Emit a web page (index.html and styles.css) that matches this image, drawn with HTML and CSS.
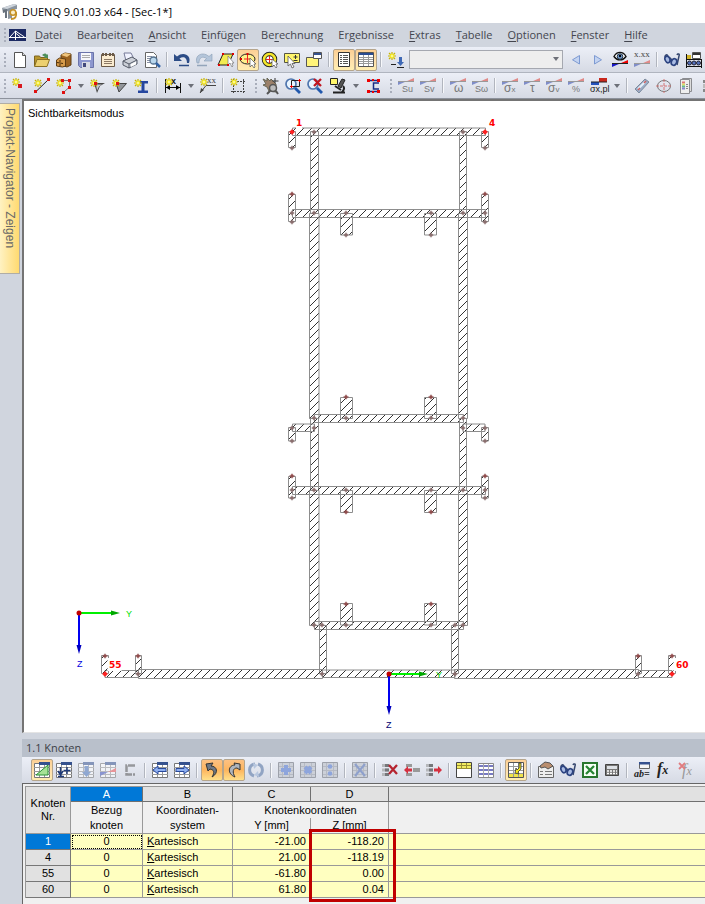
FILE: index.html
```html
<!DOCTYPE html>
<html lang="de">
<head>
<meta charset="utf-8">
<title>DUENQ 9.01.03 x64 - [Sec-1*]</title>
<link rel="stylesheet" href="styles.css">
</head>
<body>
<svg class="defs" aria-hidden="true">
  <defs>
    <g id="star"><path d="M4 0v8M0 4h8M1 1l6 6M7 1l-6 6" stroke="#c8b400" stroke-width="1.2"/><circle cx="4" cy="4" r="2.3" fill="#f4ea30"/><circle cx="4" cy="4" r="1" fill="#fffcb0"/></g>
    <g id="slope"><path d="M0 7V3.500h8z" fill="#7f8dc8"/><path d="M8 3.500L16 0v3.500z" fill="#e08a88"/><path d="M0 3.500h16" stroke="#999"/></g>
    <g id="sheet"><path d="M.5 1.500h15v14H.5z" fill="#fff" stroke="#777"/><path d="M0 5.500h16M0 9.500h16M0 12.500h16M5.500 3v12M10.500 3v12" stroke="#999"/><path d="M5 0h11v3H5z" fill="#35518e"/></g>
    <g id="mat"><path d="M.5 .5h15v15H.5z" fill="#ccd0d8" stroke="#9da1aa"/><path d="M1 4.500h14M1 8.500h14M1 12.500h14M4.500 1v14M11.500 1v14" stroke="#b6bac4"/></g>
    <g id="rows"><path d="M0 2h7v3H0zM0 6.500h7v3H0zM0 11h7v3H0z" fill="#b5b7bb"/><path d="M3 2h4v3H3zM3 6.500h4v3H3zM3 11h4v3H3z" fill="#75777b"/></g>
    <g id="glasses"><path d="M1 5c0-2 2-3 3-1M5 5l3 3M13 3c1-2 3-1 2 1l-2 9" fill="none" stroke="#35466e" stroke-width="1.500"/><ellipse cx="3.500" cy="7.500" rx="2.400" ry="3.400" fill="#a9bbe3" stroke="#2c4380" stroke-width="1.600" transform="rotate(-25 3.500 7.500)"/><ellipse cx="10" cy="10" rx="2.600" ry="3.400" fill="#a9bbe3" stroke="#2c4380" stroke-width="1.600" transform="rotate(25 10 10)"/><path d="M5.500 8.500h2.500" stroke="#2c4380" stroke-width="2"/></g>
    <pattern id="hatch" width="8" height="8" patternUnits="userSpaceOnUse"><path d="M-1 1L1-1M0 8L8 0M7 9l2-2" stroke="#333" stroke-width="1"/></pattern>
    <g id="node"><circle r="1.800" fill="#8a6464"/><path d="M-2.500 0h5M0-2.500v5" stroke="#8a7777" stroke-width=".8"/></g>
    <g id="tip"><circle r="1.700" fill="#982626"/><path d="M-3 0h6M0-2.500v5" stroke="#8a6666" stroke-width=".8"/></g>
    <g id="mark"><circle r="2" fill="#f00"/><path d="M-3 0h6M0-3v6" stroke="#f33" stroke-width=".8"/></g>
  </defs>
</svg>

<header class="title">
  <svg class="logo" width="18" height="18" viewBox="0 0 18 18"><path d="M1 5l12-4 3 1v4l-5 1v8l-4 1V8L2 10z" fill="#8b949e"/><path d="M1 5l12-4 3 1-10 4z" fill="#cfd5dc"/><path d="M2 7l4-1v9H4V9l-2 1z" fill="#69727d"/><circle cx="12" cy="9.500" r="2.800" fill="#f8edc8" stroke="#c59127" stroke-width="1.500"/><path d="M15 9c1 5-1 7-5 7" fill="none" stroke="#c59127" stroke-width="1.800"/></svg>
  <h1>DUENQ 9.01.03 x64 - [Sec-1*]</h1>
</header>

<nav class="menu" aria-label="Menü">
  <span class="grip"></span>
  <svg class="app" width="17" height="12" viewBox="0 0 17 12"><path d="M0 0h17v12H0z" fill="#1c2a63"/><path d="M0 8.500h17M6.500 2v9M6.500 2L1 8M6.500 2l9 6M6.500 4l5 4" stroke="#fff" fill="none"/></svg>
  <a href="#"><u>D</u>atei</a><a href="#">Bearbeite<u>n</u></a><a href="#"><u>A</u>nsicht</a><a href="#">E<u>i</u>nfügen</a><a href="#">Be<u>r</u>echnung</a><a href="#">Er<u>g</u>ebnisse</a><a href="#"><u>E</u>xtras</a><a href="#"><u>T</u>abelle</a><a href="#"><u>O</u>ptionen</a><a href="#"><u>F</u>enster</a><a href="#"><u>H</u>ilfe</a>
</nav>

<div class="bar" role="toolbar" aria-label="Standard">
  <span class="grip"></span>
  <button aria-label="Neu"><svg viewBox="0 0 16 16"><path d="M2.500.5h8l3 3v12h-11z" fill="#fff" stroke="#555"/><path d="M10.500.5v3h3" fill="#ddd" stroke="#555"/></svg></button>
  <button aria-label="Öffnen"><svg viewBox="0 0 16 16"><path d="M.5 14V4h5l1 1.500h7V8" fill="#b8962c" stroke="#7c6420"/><path d="M.5 14.500L3 7.500h12.500l-2.500 7z" fill="#ecd070" stroke="#8a7024"/><path d="M8 3c2-2 4-2 5 0l1-1v4h-4l1-1c-1-1-2-1-3-2" fill="#4d8f5b"/></svg></button>
  <button aria-label="Archiv"><svg viewBox="0 0 16 16"><path d="M5 3l4-2 6 1v11l-4 2-6-2z" fill="#9b621f" stroke="#5f3e14"/><path d="M5 3l4-2 6 1-4 3z" fill="#efc47c"/><path d="M0.500 8l3-2 6 1v7l-3 1-6-1z" fill="#d79a48" stroke="#5f3e14"/><path d="M1 10.500l6 1M3 9h2M3 13h2" stroke="#4a2c08"/></svg></button>
  <button aria-label="Speichern"><svg viewBox="0 0 16 16"><path d="M.5.5h15v15h-13l-2-2z" fill="#8d97cf" stroke="#6b74aa"/><path d="M3 1h10v7H3z" fill="#f7f7fb"/><path d="M4 3.500h8M4 5.500h8" stroke="#aaa"/><path d="M4 10h8v6H4z" fill="#d9dbe5"/><path d="M5 11h3v4H5z" fill="#42497d"/></svg></button>
  <button aria-label="Zwischenablage"><svg viewBox="0 0 16 16"><path d="M1.500 2.500h13v12h-13z" fill="#faebd0" stroke="#6b5a48"/><path d="M3 1v3M6 1v3M10 1v3M13 1v3" stroke="#6b5a48" stroke-width="2"/><path d="M4 7.500h8M4 9.500h8M4 11.500h8" stroke="#8b7864"/></svg></button>
  <button aria-label="Drucken"><svg viewBox="0 0 16 16"><path d="M2 1h7l3 6-8 2z" fill="#f1f3ff" stroke="#777b99"/><path d="M1 9l9-4 5 3v4l-8 4-6-3z" fill="#ccd0d8" stroke="#535966"/><path d="M1 9l6 3 8-4M7 12v4" stroke="#535966" fill="none"/><path d="M9 12l5-2.500v3L9 15z" fill="#fff"/></svg></button>
  <button aria-label="Vorschau"><svg viewBox="0 0 16 16"><path d="M1.500.5h8l3 3v12h-11z" fill="#fff" stroke="#666"/><path d="M3 4.500h5M3 6.500h4M3 8.500h3M3 10.500h3" stroke="#8890a4"/><circle cx="9.500" cy="8.500" r="3.500" fill="#b9d7ed" stroke="#54718e" stroke-width="1.300"/><path d="M12 11l4 4" stroke="#3263a5" stroke-width="2.500"/></svg></button>
  <span class="sep"></span>
  <button aria-label="Rückgängig"><svg viewBox="0 0 16 16"><path d="M0 2v7h8L5.500 6.500C9 4 13 5 13 11h2C18 3 9-1 3 4.500z" fill="#2c4c86"/><path d="M5 13.500h10" stroke="#2c4c86" stroke-width="1.500"/></svg></button>
  <button aria-label="Wiederholen"><svg viewBox="0 0 16 16"><path d="M16 2v7H8l2.500-2.500C7 4 3 5 3 11H1C-2 3 7-1 13 4.500z" fill="#b4c5da" stroke="#8a9db5" stroke-width=".6"/><path d="M1 13.500h10" stroke="#93a4ba" stroke-width="1.500"/></svg></button>
  <button aria-label="Fläche"><svg viewBox="0 0 16 16"><path d="M5 2h10l-5 11H0z" fill="#f2ec51" stroke="#222"/><path d="M10 4v9l2-2 2 4 1-1-1-3h2z" fill="#fff" stroke="#777" stroke-width=".7"/><path d="M4 1h2v2H4zM14 1h2v2h-2zM0 12h2v2H0zM9 12h2v2H9z" fill="#d00"/></svg></button>
  <button class="on" aria-label="Ellipse"><svg viewBox="0 0 16 16"><ellipse cx="7.500" cy="7" rx="7.500" ry="5" fill="#fdf08a" stroke="#222"/><path d="M7.500 3v8M4 7h7" stroke="#e22"/><path d="M10 6v9l2-2 2 3 1-1-1-3h2z" fill="#fff" stroke="#555" stroke-width=".7"/><path d="M6.500 1h2v2h-2zM0 6h2v2H0z" fill="#d00"/></svg></button>
  <button aria-label="Ring"><svg viewBox="0 0 16 16"><circle cx="7.500" cy="7.500" r="5.500" fill="#fff" stroke="#222" stroke-width="4.500"/><circle cx="7.500" cy="7.500" r="5.500" fill="none" stroke="#f5e72c" stroke-width="2.700"/><path d="M7.500 4v7M4 7.500h7" stroke="#e22"/><path d="M10 7v8l2-2 2 3 1-1-1-3h2z" fill="#fff" stroke="#555" stroke-width=".7"/></svg></button>
  <button aria-label="Auswahl"><svg viewBox="0 0 16 16"><path d="M.5 1.500h15v9H.5z" fill="#fff56b" stroke="#554"/><path d="M11.500 3v4M9.500 5h4M9.500 8.500h4" stroke="#333"/><path d="M4 4v10l2.500-2 1.500 4 2-1-2-3.500h3z" fill="#fff" stroke="#555" stroke-width=".8"/></svg></button>
  <button aria-label="Fenster"><svg viewBox="0 0 16 16"><path d="M.5 5.500h12v9H.5z" fill="#fff47a" stroke="#555"/><path d="M7.500.5h8v6h-8z" fill="#fff" stroke="#555"/><path d="M8 1h7v2H8z" fill="#35518e"/></svg></button>
  <span class="sep"></span>
  <button class="on" aria-label="Navigator"><svg viewBox="0 0 16 16"><path d="M2.500.5h11v14h-11z" fill="#fff" stroke="#333"/><path d="M4 3.500h2M7 3.500h5M4 5.500h2M7 5.500h5M4 7.500h2M7 7.500h5M4 9.500h2M7 9.500h5M4 11.500h2M7 11.500h5" stroke="#555"/></svg></button>
  <button class="on" aria-label="Tabellen"><svg viewBox="0 0 16 16"><path d="M.5.5h15v14H.5z" fill="#fff" stroke="#555"/><path d="M1 1h14v2H1z" fill="#294b91"/><path d="M1 5.500h14M1 7.500h14M1 9.500h14M1 11.500h14M5.500 3v11M10.500 3v11" stroke="#999"/></svg></button>
  <span class="sep"></span>
  <button aria-label="Neuer Lastfall"><svg viewBox="0 0 16 16"><use href="#star"/><path d="M3 12.500h5M9 15.500h7" stroke="#222"/><path d="M11 5h3v5h2l-3.500 4L9 10h2z" fill="#3e68b5"/></svg></button>
  <label class="combo"><select aria-label="Lastfall"><option></option></select></label>
  <button aria-label="Zurück"><svg viewBox="0 0 16 16"><path d="M11.500 3.500v8.500l-7-4.200z" fill="#c3d3f1" stroke="#7d9ad2"/></svg></button>
  <button aria-label="Vor"><svg viewBox="0 0 16 16"><path d="M4.500 3.500v8.500l7-4.200z" fill="#c3d3f1" stroke="#7d9ad2"/></svg></button>
  <button aria-label="Ergebnisse"><svg viewBox="0 0 16 16"><path d="M2 4.500C5-1 11-1 14 4.500 11 9 5 9 2 4.500z" fill="#fff" stroke="#111" stroke-width="1.400"/><circle cx="8" cy="4.500" r="2.800" fill="#6f97cc" stroke="#234"/><circle cx="8" cy="4" r="1.200"/><path d="M0 15v-3.500h8z" fill="#1616c8"/><path d="M8 11.500L16 8v3.500z" fill="#e00"/><path d="M0 11.500h16" stroke="#222"/></svg></button>
  <button aria-label="Werte"><svg viewBox="0 0 16 16"><text x="0" y="5" class="serif">x.xx</text><use href="#slope" y="8"/></svg></button>
  <span class="sep"></span>
  <button aria-label="Brille"><svg viewBox="0 0 16 16"><use href="#glasses"/></svg></button>
  <button aria-label="Einstellungen"><svg viewBox="0 0 16 16"><path d="M0 7.500h16M0 14.500h16M.5 2v14M15.500 7v9" stroke="#111"/><path d="M1 3h4v4H1z" fill="#d1b42a"/><path d="M6.500.5h8v6h-8z" fill="#fff" stroke="#555"/><path d="M7 1h7v2H7z" fill="#333"/><g fill="#5471bd" stroke="#223"><circle cx="3.500" cy="11" r="2"/><circle cx="8" cy="11" r="2"/><circle cx="12.500" cy="11" r="2"/></g></svg></button>
</div>

<div class="bar second" role="toolbar" aria-label="Bearbeiten">
  <span class="grip"></span>
  <button aria-label="Knoten"><svg viewBox="0 0 16 16"><use href="#star"/><path d="M6 6h4v4H6z" fill="#d8191f"/></svg></button>
  <button aria-label="Linie"><svg viewBox="0 0 16 16"><path d="M1.500 14L14.500 1.500" stroke="#222"/><use href="#star" y="1"/><path d="M0 12h3v3H0zM13 0h3v3h-3z" fill="#e01010"/></svg></button>
  <button aria-label="Polylinie"><svg viewBox="0 0 16 16"><path d="M4 2.500h9.500v6.500L8 14" fill="none" stroke="#777"/><use href="#star" y="1"/><path d="M5 1h3v3H5zM12 1h3v3h-3zM12 8h3v3h-3zM6 13h3v3H6z" fill="#e01010"/></svg></button>
  <button class="drop" aria-label="Mehr Linien"></button>
  <button aria-label="Winkel"><svg viewBox="0 0 16 16"><path d="M4 5h11l-5 3-3 7z" fill="#444"/><path d="M6 6.500h6L9 8.500l-2 4z" fill="#c5c8cf"/><use href="#star" y="1"/><path d="M4 4h3v3H4z" fill="#e01010"/></svg></button>
  <button aria-label="Fläche neu"><svg viewBox="0 0 16 16"><path d="M4 5.500h10.500L7 14z" fill="#92959a" stroke="#444"/><use href="#star" y="1"/><path d="M4 4h3v3H4z" fill="#e01010"/></svg></button>
  <button aria-label="Profil"><svg viewBox="0 0 16 16"><path d="M4 3h10v2.500h-3.500v7H14V15H4v-2.500h3.500v-7H4z" fill="#25469f"/><use href="#star" y="1"/></svg></button>
  <span class="sep"></span>
  <button class="wide" aria-label="Bemaßung"><svg viewBox="0 0 16 16"><path d="M.5 1v14M15.500 5v10M1 9.500h14" stroke="#111"/><path d="M1 9.500l4-2.500v5zM15 9.500L11 7v5z"/><text x="6" y="6" class="bold">x</text><use href="#star"/></svg></button>
  <button class="drop" aria-label="Mehr Bemaßungen"></button>
  <button aria-label="Beschriftung"><svg viewBox="0 0 16 16"><path d="M0 15L6 7.500h10" fill="none" stroke="#444"/><path d="M0 15l1-5 3 2z" fill="#444"/><use href="#star"/><text x="7" y="5" class="serif">xx</text></svg></button>
  <span class="sep"></span>
  <button aria-label="Raster"><svg viewBox="0 0 16 16"><path d="M1 3.500h15M1 13.500h15M3.500 1v15M13.500 1v15" stroke="#444" stroke-dasharray="2 1"/><use href="#star"/></svg></button>
  <span class="end"></span><span class="grip"></span>
  <button aria-label="Verschieben"><svg viewBox="0 0 16 16"><path d="M0 1l4 2V0l3 3 1-2 5 5v8l-7-1-2-4-4-2 3-1z" fill="#9c8069" stroke="#665"/><path d="M12 0v5M9.500 3h6" stroke="#333"/><circle cx="10" cy="10" r="3.500" fill="#bbb" stroke="#555" stroke-width="1.500"/><path d="M13 13l2 3M7 13l-3 3" stroke="#555" stroke-width="2"/></svg></button>
  <button aria-label="Zoom"><svg viewBox="0 0 16 16"><circle cx="6" cy="6" r="5" fill="#eaf5ff" stroke="#4f75ae" stroke-width="1.700"/><path d="M10 10l5 5" stroke="#2259ad" stroke-width="2.800"/><path d="M6.500 2.500h8v6h-8z" fill="none" stroke="#222"/><path d="M13 2.500h3M14.500 1v3M5 8.500h3M6.500 7v3" stroke="#e00"/></svg></button>
  <button aria-label="Zoom aufheben"><svg viewBox="0 0 16 16"><circle cx="6" cy="6" r="5" fill="#eaf5ff" stroke="#4f75ae" stroke-width="1.700"/><path d="M10 10l5 5" stroke="#2259ad" stroke-width="2.800"/><path d="M7 1l7 7M14 1L7 8" stroke="#c01620" stroke-width="2.300"/></svg></button>
  <button class="wide" aria-label="Ansicht"><svg viewBox="0 0 16 16"><path d="M.5.5h7v6h-7z" fill="#fff66a" stroke="#222"/><path d="M12 1l3 1-4 8-3-2z" fill="#555" stroke="#222"/><path d="M5 8l6 4M3 14.500h12M13 8c2 2 1 4-1 6" stroke="#222" stroke-width="2" fill="none"/></svg></button>
  <button class="drop" aria-label="Mehr Ansichten"></button>
  <button aria-label="Querschnitt"><svg viewBox="0 0 16 16"><path d="M3 2.500h11M14 5H8.500v6H14M3 13.500h11" stroke="#182d86" stroke-width="1.500" fill="none"/><path d="M2 1h3v3H2zM12 1h3v3h-3zM2 12h3v3H2zM12 12h3v3h-3zM7 1h2v2H7zM7 13h2v2H7z" fill="#e00"/></svg></button>
  <span class="end"></span><span class="grip"></span>
  <button aria-label="Su"><svg viewBox="0 0 16 16"><use href="#slope"/><text x="4" y="14">Su</text></svg></button>
  <button aria-label="Sv"><svg viewBox="0 0 16 16"><use href="#slope"/><text x="4" y="14">Sv</text></svg></button>
  <span class="sep"></span>
  <button aria-label="Omega"><svg viewBox="0 0 16 16"><use href="#slope"/><text x="4" y="14" class="big">ω</text></svg></button>
  <button aria-label="S Omega"><svg viewBox="0 0 16 16"><use href="#slope"/><text x="3" y="14">Sω</text></svg></button>
  <span class="sep"></span>
  <button aria-label="Sigma x"><svg viewBox="0 0 16 16"><use href="#slope"/><text x="2" y="14" class="big">σ<tspan class="sub">x</tspan></text></svg></button>
  <button aria-label="Tau"><svg viewBox="0 0 16 16"><use href="#slope"/><text x="6" y="14" class="big">τ</text></svg></button>
  <button aria-label="Sigma v"><svg viewBox="0 0 16 16"><use href="#slope"/><text x="2" y="14" class="big">σ<tspan class="sub">v</tspan></text></svg></button>
  <button aria-label="Prozent"><svg viewBox="0 0 16 16"><use href="#slope"/><text x="4" y="14">%</text></svg></button>
  <button class="wide" aria-label="Sigma plastisch"><svg viewBox="0 0 16 16"><path d="M0 4h8v3H0z" fill="#2453bd"/><path d="M8 0h8v4H8z" fill="#c8271c"/><path d="M0 4h16" stroke="#222"/><text x="-1" y="14" class="dark">σx,pl</text></svg></button>
  <button class="drop" aria-label="Mehr Spannungen"></button>
  <span class="sep"></span>
  <button aria-label="Teilflächen"><svg viewBox="0 0 16 16"><path d="M1 11L11 1l4 3L5 15z" fill="#9caec7" stroke="#7d8b9e"/><path d="M4 11l7-7" stroke="#e5f0fa" stroke-width="2"/><path d="M4 12l2-2M10 5l2-2" stroke="#cf6060" stroke-width="1.500"/></svg></button>
  <button aria-label="Kern"><svg viewBox="0 0 16 16"><ellipse cx="8" cy="8" rx="6.500" ry="5.500" fill="none" stroke="#777"/><path d="M8 1v14M0 8h16" stroke="#d37676" stroke-dasharray="3 1"/></svg></button>
  <button aria-label="Farbskala"><svg viewBox="0 0 16 16"><path d="M4.500.5h9v13h-9z" fill="#ddd" stroke="#8b8c90"/><path d="M2.500 1.500h9v14h-9z" fill="#eee" stroke="#8b8c90"/><path d="M4 4.500h3" stroke="#d77" stroke-width="2"/><path d="M4 6.500h3" stroke="#dd6" stroke-width="2"/><path d="M4 8.500h3" stroke="#6b8" stroke-width="2"/><path d="M4 10.500h3" stroke="#88c" stroke-width="2"/><path d="M8 6.500h2M8 8.500h2M8 10.500h2" stroke="#888"/></svg></button>
  <button aria-label="Mehr"><svg viewBox="0 0 16 16"><path d="M3 2h10v3H3zM3 11h10v3H3z" fill="#888"/><path d="M3 6h10v4H3z" fill="#bbb"/></svg></button>
</div>

<main class="work">
  <aside class="dock"><button class="tab">Projekt-Navigator - Zeigen</button></aside>
  <div class="panes">
    <section class="view">
      <p class="mode">Sichtbarkeitsmodus</p>
      <svg class="section" viewBox="24 101 681 631" role="img" aria-label="Querschnitt Sec-1">
        <g class="parts">
          <path d="M292.500 128h193v7.500h-193zM310.500 131.500h8v82h-8zM459.500 131.500h7v82h-7zM288.500 131.500h7v16h-7zM481.500 131.500h7v16h-7z"/>
          <path d="M292.500 209.500h193v8h-193zM288.500 194.500h7v27h-7zM481.500 194.500h7v27h-7zM340.500 213.500h12v21.500h-12zM424.500 213.500h12v21.500h-12z"/>
          <path d="M309.500 213.500h9.500v205h-9.500zM458.500 213.500h9v205h-9zM314.500 414.500h149v8h-149zM340.500 397.500h12v21h-12zM424.500 397.500h12v21h-12z"/>
          <path d="M310.500 418.500h8v72h-8zM459.500 418.500h7v72h-7zM292.500 424h22v7.500h-22zM463 424h22v7.500h-22zM288.500 427.500h7v13.500h-7zM481.500 427.500h7v13.500h-7z"/>
          <path d="M292.500 486.500h193v8h-193zM288.500 476.500h7v21.500h-7zM481.500 476.500h7v21.500h-7zM340.500 490.500h12v22h-12zM424.500 490.500h12v22h-12z"/>
          <path d="M309.500 490.500h9.500v135h-9.500zM458.500 490.500h9v135h-9zM314.500 621.500h149v8h-149zM340.500 603.500h12v21.500h-12zM424.500 603.500h12v21.500h-12z"/>
          <path d="M319.500 625.500h7v48h-7zM451.500 625.500h7v48h-7zM322.500 670h132.500v7.500H322.500zM105 670.500h33.500v7H105zM638.500 670.500H672v7h-33.500z"/>
          <path d="M138.500 669.500h184v9h-184zM454.500 669.500h184v9h-184zM101.500 655.500h7v18h-7zM135.500 655.500h6v18h-6zM635.500 655.500h6v18h-6zM668.500 655.500h7v18h-7z"/>
        </g>
        <path d="M107.500 658h14v13h-14zM673.500 658h15v13h-15zM296 116h6v13h-6z" fill="#fff"/>
        <g>
          <use href="#node" x="314" y="132"/><use href="#node" x="463" y="132"/><use href="#node" x="292" y="148"/><use href="#node" x="485" y="148"/>
          <use href="#node" x="292" y="213"/><use href="#node" x="314" y="213"/><use href="#node" x="346" y="213"/><use href="#node" x="431" y="213"/><use href="#node" x="463" y="213"/><use href="#node" x="485" y="213"/><use href="#node" x="292" y="222"/><use href="#node" x="485" y="222"/><use href="#node" x="346" y="235"/><use href="#node" x="431" y="235"/>
          <use href="#node" x="314" y="418"/><use href="#node" x="346" y="418"/><use href="#node" x="431" y="418"/><use href="#node" x="463" y="418"/><use href="#node" x="292" y="428"/><use href="#node" x="314" y="428"/><use href="#node" x="463" y="428"/><use href="#node" x="485" y="428"/><use href="#node" x="292" y="441"/><use href="#node" x="485" y="441"/>
          <use href="#node" x="292" y="490"/><use href="#node" x="314" y="490"/><use href="#node" x="346" y="490"/><use href="#node" x="431" y="490"/><use href="#node" x="463" y="490"/><use href="#node" x="485" y="490"/><use href="#node" x="292" y="498"/><use href="#node" x="485" y="498"/>
          <use href="#node" x="314" y="625"/><use href="#node" x="322" y="625"/><use href="#node" x="346" y="625"/><use href="#node" x="431" y="625"/><use href="#node" x="455" y="625"/><use href="#node" x="463" y="625"/><use href="#node" x="138" y="674"/><use href="#node" x="322" y="674"/><use href="#node" x="455" y="674"/><use href="#node" x="638" y="674"/>
          <use href="#tip" x="292" y="194"/><use href="#tip" x="485" y="194"/><use href="#tip" x="346" y="397"/><use href="#tip" x="431" y="397"/><use href="#tip" x="292" y="476"/><use href="#tip" x="485" y="476"/><use href="#tip" x="346" y="512"/><use href="#tip" x="431" y="512"/><use href="#tip" x="346" y="604"/><use href="#tip" x="431" y="604"/><use href="#tip" x="105" y="656"/><use href="#tip" x="138" y="656"/><use href="#tip" x="638" y="656"/><use href="#tip" x="672" y="656"/>
          <use href="#mark" x="292" y="132"/><use href="#mark" x="485" y="132"/><use href="#mark" x="105" y="674"/><use href="#mark" x="672" y="674"/>
        </g>
        <g class="ids"><text x="296" y="126">1</text><text x="489" y="126">4</text><text x="109" y="668">55</text><text x="676" y="668">60</text></g>
        <g class="axes">
          <path d="M79 613h34M389 674h32" stroke="#00f000"/><path d="M79 613v34M389 674v33" stroke="#0000f0"/>
          <path d="M111 610.500l9 2.500-9 2.500zM419 671.500l9 2.500-9 2.500z" fill="#00a800"/><path d="M76.500 645l2.500 9 2.500-9zM386.500 706l2.500 9 2.500-9z" fill="#0000c0"/>
          <circle cx="79" cy="613" r="2.500" fill="#c00000"/><circle cx="389" cy="674" r="2.500" fill="#c00000"/>
          <text x="126" y="617" fill="#00e000">Y</text><text x="77" y="667" fill="#0000e0">Z</text><text x="436" y="678" fill="#00d000">Y</text><text x="386" y="728" fill="#000070">Z</text>
        </g>
      </svg>
    </section>

    <section class="data">
      <h2>1.1 Knoten</h2>
      <div class="bar tools" role="toolbar" aria-label="Tabelle">
        <button class="on" aria-label="Dreieck"><svg viewBox="0 0 16 16"><use href="#sheet"/><path d="M2 13L14 3v10z" fill="#a6e296" stroke="#289036"/></svg></button>
        <button aria-label="Einfügen"><svg viewBox="0 0 16 16"><use href="#sheet"/><path d="M4.500 5v7M2 9l2.500 4L7 9M2 14.500h6M11 5v7M7.500 8.500h7" stroke="#203b78" stroke-width="1.500" fill="none"/></svg></button>
        <button aria-label="Übernehmen"><svg viewBox="0 0 16 16" class="dim"><use href="#sheet"/><path d="M6.500 4h4v6H13l-4.500 5L4 10h2.500z" fill="#4f78bd"/></svg></button>
        <button aria-label="Verlauf"><svg viewBox="0 0 16 16" class="dim"><use href="#sheet"/><path d="M0 14v-4h8z" fill="#45b"/><path d="M8 10l8-4v4z" fill="#e55"/></svg></button>
        <button aria-label="Profil"><svg viewBox="0 0 16 16" class="dim"><path d="M13 3.500H4.500v9H13" fill="none" stroke="#555" stroke-width="2.500" stroke-dasharray="7 1"/></svg></button>
        <span class="sep"></span>
        <button aria-label="Vorige Tabelle"><svg viewBox="0 0 16 16"><use href="#sheet"/><path d="M1 8l5-4v2.500h8v3H6V12z" fill="#8fb0f0" stroke="#28499c"/></svg></button>
        <button aria-label="Nächste Tabelle"><svg viewBox="0 0 16 16"><use href="#sheet"/><path d="M15 8l-5-4v2.500H2v3h8V12z" fill="#8fb0f0" stroke="#28499c"/></svg></button>
        <span class="sep"></span>
        <button class="on warm" aria-label="Rückgängig"><svg viewBox="0 0 16 16"><path d="M2 2l7-1-2 3c6 0 8 7 1 11 3-5 2-7-2-8L4 9z" fill="#6f7884" stroke="#333"/></svg></button>
        <button class="on warm" aria-label="Wiederholen"><svg viewBox="0 0 16 16"><path d="M14 2v6L11 6c-4 0-5 4-2 9C1 12 2 3 9 3L8 1z" fill="#aeb4bd" stroke="#333"/></svg></button>
        <button aria-label="Aktualisieren"><svg viewBox="0 0 16 16"><path d="M7 2C0 3 0 12 6 14M9 14c7-1 7-10 1-12" fill="none" stroke="#91a4c3" stroke-width="3"/><path d="M5 1l5 2-4 4zM11 15l-5-2 4-4z" fill="#b8c7df"/></svg></button>
        <span class="sep"></span>
        <button aria-label="Plus"><svg viewBox="0 0 16 16"><use href="#mat"/><path d="M8 3v10M3 8h10" stroke="#8ea5dc" stroke-width="4"/></svg></button>
        <button aria-label="Mal"><svg viewBox="0 0 16 16"><use href="#mat"/><path d="M5 5l6 6M11 5l-6 6" stroke="#8ea5dc" stroke-width="4"/></svg></button>
        <button aria-label="Geteilt"><svg viewBox="0 0 16 16"><use href="#mat"/><circle cx="8" cy="4.500" r="2.300" fill="#8ea5dc"/><circle cx="8" cy="11.500" r="2.300" fill="#8ea5dc"/></svg></button>
        <span class="sep"></span>
        <button aria-label="Leeren"><svg viewBox="0 0 16 16"><use href="#mat"/><path d="M3 2l10 12M13 2L3 14" stroke="#8ea0cc" stroke-width="2"/></svg></button>
        <span class="sep"></span>
        <button aria-label="Zeile löschen"><svg viewBox="0 0 16 16"><use href="#rows"/><path d="M7 3l8 9M15 3l-8 9" stroke="#b52430" stroke-width="2.300"/></svg></button>
        <button aria-label="Zeile einfügen"><svg viewBox="0 0 16 16"><path d="M2 2h6v3H2zM2 11h6v3H2z" fill="#999"/><path d="M0 8l4-4v2.500h4v3H4V12z" fill="#d53040"/><path d="M9 6h7v4H9z" fill="#999"/></svg></button>
        <button aria-label="Zeile ausschneiden"><svg viewBox="0 0 16 16"><use href="#rows"/><path d="M16 8l-4-4v2.500H8v3h4V12z" fill="#d53040"/></svg></button>
        <span class="sep"></span>
        <button aria-label="Kopfzeile"><svg viewBox="0 0 16 16"><path d="M.5.5h15v15H.5z" fill="#fff" stroke="#444"/><path d="M1 1h14v6H1z" fill="#f1ec60"/><path d="M1 3.500h14M1 6.500h14M5.500 1v6M10.500 1v6" stroke="#999035"/></svg></button>
        <button aria-label="Spalten"><svg viewBox="0 0 16 16"><path d="M.5 1.500h15v14H.5z" fill="#fff" stroke="#888"/><path d="M1 4h14M1 8h14M1 12h14" stroke="#777ac2" stroke-width="2"/><path d="M5.500 2v13M10.500 2v13" stroke="#aaa"/></svg></button>
        <span class="sep"></span>
        <button class="on" aria-label="Zeile markieren"><svg viewBox="0 0 16 16"><path d="M.5.5h15v15H.5z" fill="#fff" stroke="#555"/><path d="M1 12h14v3H1z" fill="#eee34a"/><path d="M1 4.500h14M1 8.500h14M1 11.500h14M5.500 1v14M10.500 1v14" stroke="#999"/><path d="M11 1l2 0v6l-3 3 1 2-4-1 1-5 1 2 2-2z" fill="#f3e51b" stroke="#333" stroke-width=".8"/></svg></button>
        <span class="sep"></span>
        <button aria-label="Eigenschaften"><svg viewBox="0 0 16 16"><path d="M.5 4.500h15v11H.5z" fill="#eee" stroke="#666"/><path d="M2 9.500h3M7 9.500h7M2 12.500h3M7 12.500h7" stroke="#777"/><path d="M2 4l5-4 5 1 3 3-5 3-3-2-4 1z" fill="#b98d6e" stroke="#555"/></svg></button>
        <button aria-label="Anzeigen"><svg viewBox="0 0 16 16"><use href="#glasses"/></svg></button>
        <button aria-label="Excel"><svg viewBox="0 0 16 16"><path d="M1 1h14v14H1z" fill="#f6fff6" stroke="#28762e" stroke-width="2"/><path d="M4 4l8 8M12 4l-8 8" stroke="#278533" stroke-width="2.300"/></svg></button>
        <button aria-label="Rechner"><svg viewBox="0 0 16 16"><path d="M1.500 2.500h13v11h-13z" fill="#777" stroke="#444"/><path d="M3 4h10v3H3z" fill="#dde1e6"/><path d="M3 9h10M3 11.500h10" stroke="#fff" stroke-width="1.500" stroke-dasharray="2 1"/></svg></button>
        <span class="sep"></span>
        <button aria-label="Variablen"><svg viewBox="0 0 16 16"><path d="M5.500.5h10v6h-10z" fill="#f5f5f5" stroke="#666"/><path d="M5 0h11v2.500H5z" fill="#35518e"/><text x="0" y="15" class="fx small">ab=</text></svg></button>
        <button aria-label="Formel"><svg viewBox="0 0 16 16"><text x="1" y="12" class="fx">f<tspan class="fxsub">x</tspan></text></svg></button>
        <button aria-label="Formel löschen"><svg viewBox="0 0 16 16"><text x="4" y="13" class="fx pale">f<tspan class="fxsub">x</tspan></text><path d="M1 1l6 6M7 1L1 7" stroke="#e07c80" stroke-width="1.800"/></svg></button>
      </div>
      <div class="sheet">
        <table>
          <colgroup><col class="c0"><col class="c1"><col class="c2"><col class="c3"><col class="c3"><col></colgroup>
          <thead>
            <tr class="letters"><th rowspan="3" class="corner">Knoten<br>Nr.</th><th class="sel">A</th><th>B</th><th>C</th><th>D</th><th></th></tr>
            <tr class="names"><th class="nb">Bezug</th><th class="nb">Koordinaten-</th><th colspan="2" class="nb">Knotenkoordinaten</th><th class="nb last"></th></tr>
            <tr class="names"><th>knoten</th><th>system</th><th>Y [mm]</th><th>Z [mm]</th><th class="last"></th></tr>
          </thead>
          <tbody>
            <tr><th class="sel">1</th><td class="focus">0</td><td class="l"><u>K</u>artesisch</td><td class="r">-21.00</td><td class="r">-118.20</td><td></td></tr>
            <tr><th>4</th><td>0</td><td class="l"><u>K</u>artesisch</td><td class="r">21.00</td><td class="r">-118.19</td><td></td></tr>
            <tr><th>55</th><td>0</td><td class="l"><u>K</u>artesisch</td><td class="r">-61.80</td><td class="r">0.00</td><td></td></tr>
            <tr><th>60</th><td>0</td><td class="l"><u>K</u>artesisch</td><td class="r">61.80</td><td class="r">0.04</td><td></td></tr>
          </tbody>
        </table>
        <div class="frame"></div>
      </div>
    </section>
  </div>
</main>
</body>
</html>
```
FILE: styles.css
```css
* { box-sizing: border-box; }
body {
  margin: 0;
  min-height: 100vh;
  display: flex;
  flex-direction: column;
  overflow: hidden;
  background: #d0d5de;
  color: #000;
  font: 11px/16px "Liberation Sans", Arial, sans-serif;
}
.defs { position: absolute; width: 0; height: 0; }
button { font: inherit; color: inherit; border: 0; padding: 0; background: none; }

.title { display: flex; align-items: center; gap: 3px; height: 23px; padding-left: 1px; background: #fff; }
.title h1 { margin: 0; font: 11px/20px "Open Sans", "Noto Sans", sans-serif; }

.menu { display: flex; align-items: center; gap: 15px; height: 24px; background: #d0d5de; font: 11px/20px "Open Sans", "Noto Sans", sans-serif; }
.menu a { color: #44464f; text-decoration: none; }
.menu u { text-underline-offset: 2px; }
.menu .grip { margin-right: -15px; }
.menu .app { margin-right: -6px; }

.grip {
  flex: none;
  width: 9px;
  height: 16px;
  background: repeating-linear-gradient(#a9aebb 0 2px, transparent 2px 4px) 4px 1px / 2px 15px no-repeat;
}
.bar {
  display: flex;
  align-items: center;
  height: 26px;
  overflow: hidden;
  border-bottom: 1px solid #b0b5bf;
  background: linear-gradient(#eceff7, #d6dae4);
}
.bar.second { border-bottom: 1px solid #8d929c; }
.bar button { flex: none; display: flex; align-items: center; justify-content: center; width: 22px; height: 22px; }
.bar svg { width: 16px; height: 16px; overflow: visible; }
.bar button.wide { width: 24px; }
.bar button.wide svg { width: 18px; }
.bar button.on { border: 1px solid #b5a58c; border-radius: 2px; background: linear-gradient(#fccf94, #ffe2ac 60%, #ffeeb0); }
.bar button.warm { background: linear-gradient(#fcc183, #fdb55e 50%, #ffe08a); }
.bar button.drop { width: 12px; }
.drop::before, .combo::after { content: ""; border: 3px solid transparent; border-top: 4px solid #6d7078; border-bottom: 0; }
.sep { flex: none; width: 8px; height: 15px; background: linear-gradient(90deg, transparent 3px, #b1b5be 3px 4px, #f7f8fb 4px 5px, transparent 5px); }
.end { flex: none; width: 2px; height: 24px; }
.combo { position: relative; flex: 0 1 154px; margin: 0 2px; display: flex; }
.combo::after { position: absolute; right: 4px; top: 7px; }
.combo select { appearance: none; width: 100%; height: 19px; border: 1px solid #a5a8b0; border-radius: 0; background: #eeeeee; }
.dim { opacity: .55; }

.bar text { font: 9px "Liberation Sans", sans-serif; fill: #777; }
.bar text.big { font-size: 12px; }
.bar text.dark { fill: #222; }
.bar text.bold { font-weight: bold; font-size: 9px; fill: #111; }
.bar text.serif { font: 9px "Liberation Serif", serif; fill: #444; }
.bar .sub { font-size: 8px; }
.bar text.fx { font: italic bold 16px "Liberation Serif", serif; fill: #222; }
.bar text.small { font-size: 10px; }
.bar text.pale { fill: #999; font-weight: normal; }
.bar .fxsub { font-size: 12px; }

.work { flex: 1; display: flex; min-height: 0; }
.dock { flex: none; width: 22px; padding-top: 4px; }
.tab {
  width: 20px;
  height: 171px;
  padding: 4px 0 0;
  border: 1px solid #b0ada5;
  border-left: 0;
  background: linear-gradient(90deg, #fff2c2, #ffda70);
  writing-mode: vertical-rl;
  text-align: left;
  font-size: 12px;
  line-height: 16px;
  color: #686868;
}
.bar button, .tab { cursor: default; }
.panes { flex: 1; min-width: 0; display: flex; flex-direction: column; }
.view { position: relative; border: 2px solid #747474; border-right: 0; border-bottom: 1px solid #e4e4e4; background: #fff; }
.mode { position: absolute; left: 4px; top: 4px; margin: 0; }
.section { display: block; width: 100%; height: auto; }
.parts { fill: url(#hatch); stroke: #8d8d8d; }
.ids { font: bold 9px "DejaVu Sans", sans-serif; fill: #f00; }
.axes { font: 9px "Liberation Sans", sans-serif; }
.axes path[stroke] { stroke-width: 2; }

.data { flex: 1; display: flex; flex-direction: column; margin-top: 6px; }
.data h2 { margin: 0; padding-left: 4px; height: 18px; background: #b9c0cb; color: #3c3f47; font: 11px/18px "Open Sans", "Noto Sans", sans-serif; }
.tools { height: 26px; padding-left: 9px; border-bottom: 0; }
.sheet { position: relative; flex: 1; padding: 2px 0 0 2px; border: 1px solid #666; border-right: 0; border-bottom: 0; background: #f0f0f0; }
table { width: 100%; table-layout: fixed; border-collapse: separate; border-spacing: 0; border-left: 1px solid #999; border-top: 1px solid #999; }
.c0 { width: 45px; }
.c1 { width: 72px; }
.c2 { width: 90px; }
.c3 { width: 78px; }
th, td { padding: 0; height: 16px; line-height: 15px; font-size: 11px; font-weight: normal; text-align: center; white-space: nowrap; border-right: 1px solid #999; border-bottom: 1px solid #999; }
.letters th { height: 15px; line-height: 13px; background: #e1e1e1; border-color: #707070; }
.letters .corner { line-height: 13px; border-color: #999; }
.names th { background: #f0f0f0; }
.names .nb { border-bottom: 0; line-height: 15px; }
td { background: #ffffc0; }
tbody th { background: #e1e1e1; border-color: #777; }
th.sel, .letters th.sel { background: #0078d7; color: #fff; }
td.l { text-align: left; padding-left: 4px; }
td.r { text-align: right; padding-right: 4px; }
td.focus { outline: 1px dotted #000; outline-offset: -2px; }
th:last-child, td:last-child { border-right: 0; }
.frame { position: absolute; left: 286px; top: 45px; width: 87px; height: 73px; border: 3px solid #c00000; pointer-events: none; }
```
